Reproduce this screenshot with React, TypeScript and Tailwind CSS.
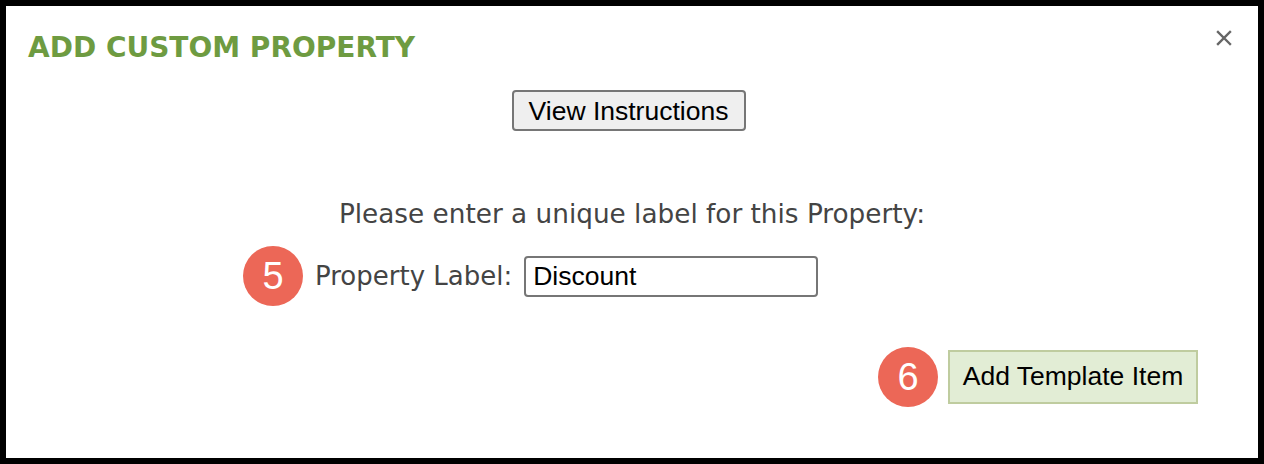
// Add Custom Property dialog
const Badge = ({ n }: { n: number }) => (
  <div className="flex h-[60px] w-[60px] shrink-0 items-center justify-center rounded-full bg-[#ec6757] font-['Liberation_Sans',Arial,sans-serif] text-[38px] leading-none text-white">
    {n}
  </div>
);

export default function App() {
  return (
    <div className="flex h-[464px] w-[1264px] flex-col border-[6px] border-black bg-white">
      {/* Header */}
      <div className="flex items-start justify-between pl-[22px] pr-[26px] pt-[26px]">
        <h1 className="font-['DejaVu_Sans',Verdana,sans-serif] text-[28px] font-bold leading-[32px] text-[#6e9b41]">
          ADD CUSTOM PROPERTY
        </h1>
        <button className="mt-[-2px] text-[#666]">
          <svg width="16" height="16" viewBox="0 0 16 16" fill="none" stroke="currentColor" strokeWidth="2.4" strokeLinecap="square">
            <path d="M2 2 L14 14 M14 2 L2 14" />
          </svg>
        </button>
      </div>

      {/* Instructions */}
      <div className="mt-[26px] flex justify-center pr-[7px]">
        <button className="h-[41px] w-[234px] rounded-[4px] border-2 border-[#767676] bg-[#efefef] font-['Liberation_Sans',Arial,sans-serif] text-[26.5px] text-black">
          View Instructions
        </button>
      </div>

      <p className="mt-[68px] text-center font-['DejaVu_Sans',Verdana,sans-serif] text-[26.3px] leading-[30px] text-[#444]">
        Please enter a unique label for this Property:
      </p>

      {/* Label row */}
      <div className="mt-[17px] flex items-center pl-[237px]">
        <Badge n={5} />
        <label className="ml-[12px] font-['DejaVu_Sans',Verdana,sans-serif] text-[26px] text-[#444]">
          Property Label:
        </label>
        <input
          defaultValue="Discount"
          className="ml-[12px] h-[41px] w-[294px] rounded-[4px] border-2 border-[#767676] px-[7px] font-['Liberation_Sans',Arial,sans-serif] text-[26.5px] text-black outline-none"
        />
      </div>

      {/* Submit row */}
      <div className="mt-[41px] flex items-center justify-end pr-[60px]">
        <Badge n={6} />
        <button className="ml-[10px] h-[54px] w-[250px] border-2 border-[#bfcc9f] bg-[#e2edd5] font-['Liberation_Sans',Arial,sans-serif] text-[26.5px] text-black">
          Add Template Item
        </button>
      </div>
    </div>
  );
}
